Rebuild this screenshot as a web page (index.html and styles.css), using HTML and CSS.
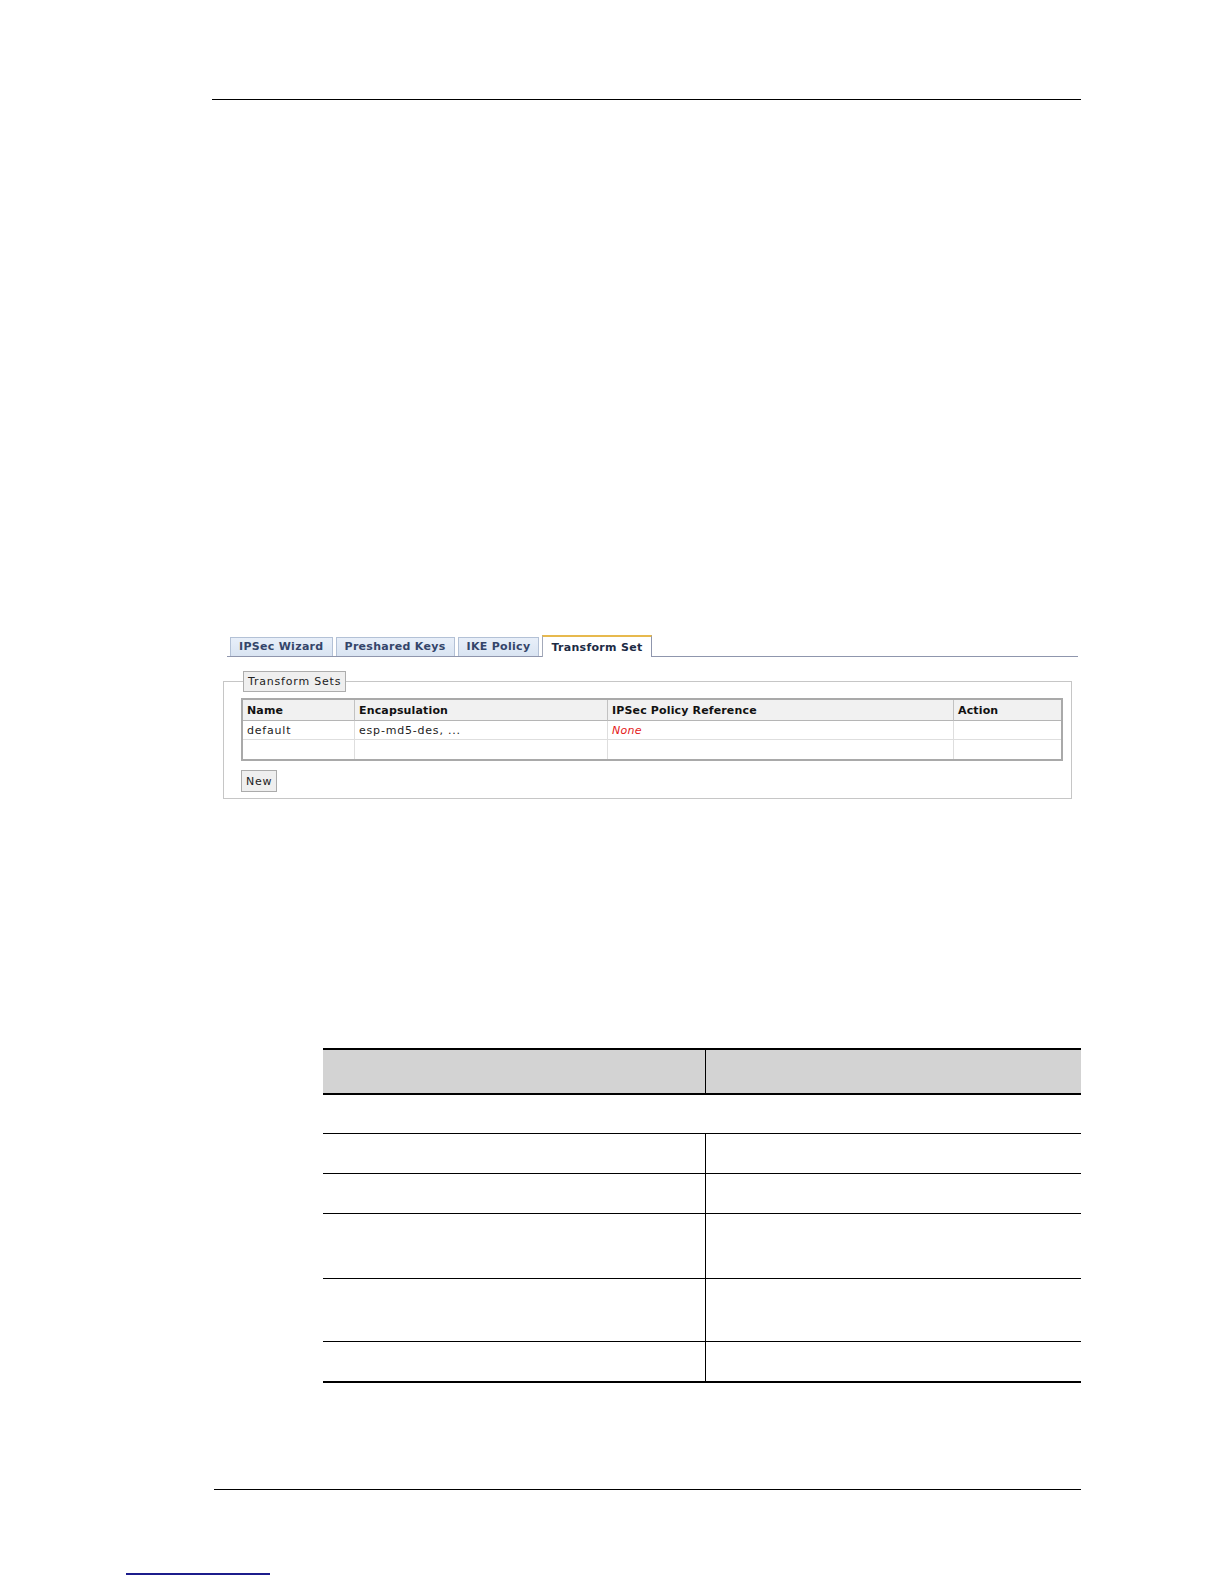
FILE: index.html
```html
<!DOCTYPE html>
<html>
<head>
<meta charset="utf-8">
<title>Transform Set</title>
<link rel="stylesheet" href="styles.css">
</head>
<body>
<div class="page">
  <div class="rule rule-top"></div>

  <div class="tabs">
    <div class="tab">IPSec Wizard</div>
    <div class="tab">Preshared Keys</div>
    <div class="tab">IKE Policy</div>
    <div class="tab tab-active">Transform Set</div>
  </div>

  <fieldset class="box">
    <legend class="box-legend">Transform Sets</legend>
    <table class="grid">
      <colgroup>
        <col class="c1"><col class="c2"><col class="c3"><col class="c4">
      </colgroup>
      <thead>
        <tr><th>Name</th><th>Encapsulation</th><th>IPSec Policy Reference</th><th>Action</th></tr>
      </thead>
      <tbody>
        <tr class="r1"><td>default</td><td>esp-md5-des, ...</td><td class="none">None</td><td></td></tr>
        <tr class="r2"><td></td><td></td><td></td><td></td></tr>
      </tbody>
    </table>
    <button class="btn" type="button">New</button>
  </fieldset>

  <table class="doc">
    <colgroup><col class="d1"><col class="d2"></colgroup>
    <thead>
      <tr><th></th><th></th></tr>
    </thead>
    <tbody>
      <tr class="gap"><td colspan="2"></td></tr>
      <tr class="h40"><td></td><td></td></tr>
      <tr class="h40"><td></td><td></td></tr>
      <tr class="h65"><td></td><td></td></tr>
      <tr class="h63"><td></td><td></td></tr>
      <tr class="h40 last"><td></td><td></td></tr>
    </tbody>
  </table>

  <div class="rule rule-bottom"></div>

  <div class="link-line"></div>
</div>
</body>
</html>
```

FILE: styles.css
```css
html, body {
  margin: 0;
  padding: 0;
  background: #ffffff;
}

.page {
  width: 1224px;
  height: 1584px;
  overflow: hidden;
  font-family: "DejaVu Sans", Verdana, sans-serif;
  font-size: 11px;
  color: #111;
}

.rule {
  height: 0;
  border-top: 1px solid #000;
}

.rule-top {
  margin: 99px 0 0 212px;
  width: 869px;
}

/* Tabs */
.tabs {
  display: flex;
  align-items: flex-end;
  gap: 3px;
  margin: 535px 0 0 227px;
  width: 848px;
  height: 21px;
  padding-left: 3px;
  box-sizing: content-box;
  border-bottom: 1px solid #8f96ad;
}

.tab {
  height: 18px;
  line-height: 18px;
  padding: 0 8px;
  background: linear-gradient(#e8eff9, #d9e4f2);
  border: 1px solid #b3c1d6;
  border-bottom: none;
  font-weight: bold;
  letter-spacing: 0.3px;
  color: #34456a;
  white-space: nowrap;
}

.tab-active {
  height: 20px;
  line-height: 21px;
  margin-bottom: -1px;
  background: #ffffff;
  border-top: 2px solid #e7b94e;
  border-left: 1px solid #a3a9b9;
  border-right: 1px solid #8f96ad;
  color: #1c2b45;
}

/* Fieldset */
.box {
  margin: 14px 0 0 223px;
  width: 849px;
  box-sizing: border-box;
  border: 1px solid #c6c6c6;
  padding: 6px 8px 6px 17px;
  min-width: 0;
}

.box-legend {
  margin-left: 2px;
  padding: 0 4px;
  height: 19px;
  line-height: 19px;
  background: #efefef;
  border: 1px solid #adadad;
  color: #222;
  letter-spacing: 0.8px;
}

.grid {
  width: 822px;
  border-collapse: separate;
  border-spacing: 0;
  border: 2px solid #a9a9a9;
  table-layout: fixed;
}

.c1 { width: 112px; }
.c2 { width: 253px; }
.c3 { width: 346px; }
.c4 { width: 107px; }

.grid th {
  height: 21px;
  padding: 0 4px;
  text-align: left;
  font-weight: bold;
  letter-spacing: 0.15px;
  color: #111;
  background: #f1f1f1;
  border-right: 1px solid #c2c2c2;
  border-bottom: 1px solid #b5b5b5;
  box-sizing: border-box;
}

.grid td {
  padding: 0 4px;
  border-right: 1px solid #dedede;
  color: #222;
  letter-spacing: 0.8px;
  white-space: nowrap;
  box-sizing: border-box;
}

.grid th:last-child,
.grid td:last-child {
  border-right: none;
}

.grid .r1 td {
  height: 19px;
  border-bottom: 1px solid #dedede;
}

.grid .r2 td {
  height: 19px;
}

.grid .none {
  color: #e42020;
  font-style: italic;
  letter-spacing: 0.3px;
}

.btn {
  display: block;
  margin-top: 9px;
  height: 22px;
  padding: 0 4px;
  font-family: "DejaVu Sans", Verdana, sans-serif;
  font-size: 11px;
  letter-spacing: 0.8px;
  color: #222;
  background: #efefef;
  border: 1px solid #ababab;
  border-radius: 0;
}

/* Document table */
.doc {
  margin: 249px 0 0 323px;
  width: 758px;
  border-collapse: collapse;
  table-layout: fixed;
}

.d1 { width: 382px; }
.d2 { width: 376px; }

.doc th {
  height: 43px;
  padding: 0;
  background: #d3d3d3;
  border-top: 2px solid #000;
  border-bottom: 2px solid #000;
}

.doc th:first-child {
  border-right: 1px solid #000;
}

.doc td {
  padding: 0;
  border-top: 1px solid #000;
}

.doc td:first-child {
  border-right: 1px solid #000;
}

.doc .gap td {
  height: 38px;
  border-top: none;
  border-right: none;
}

.doc .h40 td { height: 39px; }
.doc .h65 td { height: 64px; }
.doc .h63 td { height: 62px; }

.doc .last td {
  border-bottom: 2px solid #000;
}

.rule-bottom {
  margin: 106px 0 0 214px;
  width: 867px;
}

.link-line {
  margin: 83px 0 0 126px;
  width: 144px;
  height: 2px;
  background: #1c1c8c;
}
```
